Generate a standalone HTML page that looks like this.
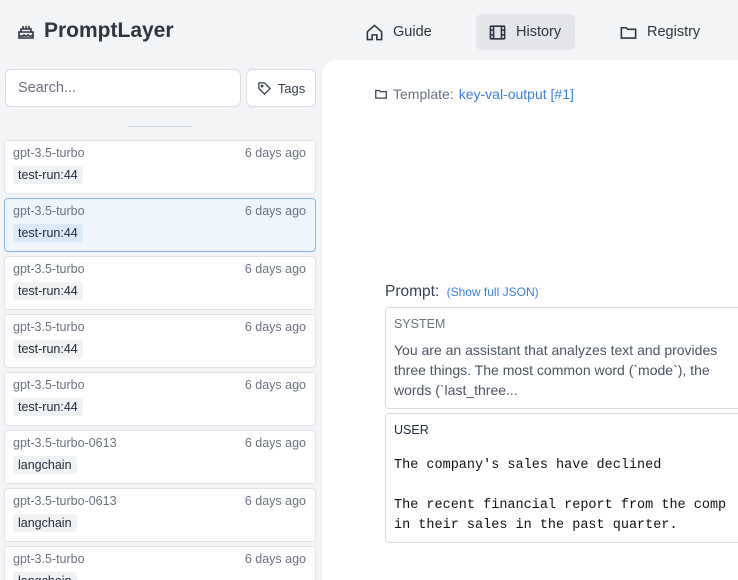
<!DOCTYPE html>
<html><head><style>
*{box-sizing:border-box;margin:0;padding:0}
html,body{width:738px;height:580px;overflow:hidden}
body{background:#f3f4f6;font-family:"Liberation Sans",sans-serif;color:#1f2937;position:relative}
.abs{position:absolute}
.logo{left:16px;top:19px;font-size:21px;font-weight:bold;color:#2d3540;display:flex;align-items:center;gap:8px}
.nav{top:14px;height:36px;display:flex;align-items:center;gap:9px;font-size:14.5px;color:#2d3540;padding:0 12px;border-radius:6px}
.search{left:5px;top:69px;width:236px;height:38px;background:#fff;border:1px solid #d8dbe0;border-radius:6px;padding:10px 12px;font-size:14.5px;color:#6b7280}
.tags{left:246px;top:69px;width:70px;height:38px;background:#fff;border:1px solid #d8dbe0;border-radius:6px;display:flex;align-items:center;justify-content:center;gap:6px;font-size:13px;color:#374151}
.card{left:4px;width:312px;height:54px;background:#fff;border:1px solid #e1e4e8;border-radius:4px}
.card.sel{background:#eef5fd;border-color:#8bb4e8}
.card .m{position:absolute;left:8px;top:5px;font-size:12.5px;color:#6b7280}
.card .d{position:absolute;right:9px;top:5px;font-size:12.5px;color:#6b7280}
.card .t{position:absolute;left:8px;top:25px;font-size:12.5px;color:#1f2937;background:#f1f2f4;padding:2px 5px;border-radius:3px}
.card.sel .t{background:#dce9f9}
.main{left:322px;top:60px;width:420px;height:520px;background:#fff;border-radius:14px 0 0 0}
.box{left:385px;width:360px;border:1px solid #d8dbe0;border-radius:4px;background:#fff}
</style></head><body>
<div class="abs logo"><svg width="20" height="20" viewBox="0 0 20 20" fill="none" stroke="#2d3540" stroke-width="1.6"><path d="M3 11h14v6H3zM3 14c2 1.5 4 1.5 5 0 1.5 1.5 3 1.5 4 0 1.5 1.5 3.5 1.5 5 0M5 11V8h10v3M7 8V5M10 8V5M13 8V5"/></svg>PromptLayer</div>
<div class="abs nav" style="left:353px"><svg width="19" height="19" viewBox="0 0 24 24" fill="none" stroke="#2d3540" stroke-width="2"><path d="M3 11l9-8 9 8v10h-6v-6H9v6H3z"/></svg>Guide</div>
<div class="abs nav" style="left:476px;width:99px;background:#e4e6ea"><svg width="19" height="19" viewBox="0 0 24 24" fill="none" stroke="#2d3540" stroke-width="2"><rect x="3" y="4" width="18" height="16" rx="1"/><path d="M7 4v16M17 4v16M3 9h4M3 15h4M17 9h4M17 15h4"/></svg>History</div>
<div class="abs nav" style="left:607px"><svg width="19" height="19" viewBox="0 0 24 24" fill="none" stroke="#2d3540" stroke-width="2"><path d="M3 6h6l2 2h10v11H3z"/></svg>Registry</div>
<div class="abs search">Search...</div>
<div class="abs tags"><svg width="15" height="15" viewBox="0 0 24 24" fill="none" stroke="#374151" stroke-width="2"><path d="M3 3h9l9 9-9 9-9-9z"/><circle cx="8" cy="8" r="1.3"/></svg>Tags</div>
<div class="abs" style="left:128px;top:126px;width:64px;height:1px;background:#cfd3d8"></div>
<div class="abs card" style="top:140px"><span class="m">gpt-3.5-turbo</span><span class="d">6 days ago</span><span class="t">test-run:44</span></div>
<div class="abs card sel" style="top:198px"><span class="m">gpt-3.5-turbo</span><span class="d">6 days ago</span><span class="t">test-run:44</span></div>
<div class="abs card" style="top:256px"><span class="m">gpt-3.5-turbo</span><span class="d">6 days ago</span><span class="t">test-run:44</span></div>
<div class="abs card" style="top:314px"><span class="m">gpt-3.5-turbo</span><span class="d">6 days ago</span><span class="t">test-run:44</span></div>
<div class="abs card" style="top:372px"><span class="m">gpt-3.5-turbo</span><span class="d">6 days ago</span><span class="t">test-run:44</span></div>
<div class="abs card" style="top:430px"><span class="m">gpt-3.5-turbo-0613</span><span class="d">6 days ago</span><span class="t">langchain</span></div>
<div class="abs card" style="top:488px"><span class="m">gpt-3.5-turbo-0613</span><span class="d">6 days ago</span><span class="t">langchain</span></div>
<div class="abs card" style="top:546px"><span class="m">gpt-3.5-turbo</span><span class="d">6 days ago</span><span class="t">langchain</span></div>
<div class="abs main"></div>
<div class="abs" style="left:374px;top:86px;font-size:14px;color:#6b7280;display:flex;align-items:center;gap:5px"><svg width="14" height="14" viewBox="0 0 24 24" fill="none" stroke="#374151" stroke-width="2.2"><path d="M3 6h6l2 2h10v11H3z"/></svg>Template: <span style="color:#3b82d6">key-val-output [#1]</span></div>
<div class="abs" style="left:385px;top:283px;font-size:15.5px;color:#374151">Prompt: <span style="font-size:12px;color:#3b82d6;margin-left:3px">(Show full JSON)</span></div>
<div class="abs box" style="top:307px;height:102px;padding:9px 8px;font-size:14px;color:#4b5563;line-height:20px"><div style="font-size:12.5px;color:#6b7280;margin-bottom:9px;line-height:14px">SYSTEM</div><div style="white-space:nowrap">You are an assistant that analyzes text and provides<br>three things. The most common word (`mode`), the<br>words (`last_three...</div></div>
<div class="abs box" style="top:413px;height:130px;padding:9px 8px"><div style="font-size:12.5px;color:#1f2937;line-height:14px">USER</div><div style="font-family:'Liberation Mono',monospace;font-size:13.5px;color:#111;line-height:20px;margin-top:19px;white-space:pre">The company's sales have declined

The recent financial report from the comp
in their sales in the past quarter.</div></div>
</body></html>
